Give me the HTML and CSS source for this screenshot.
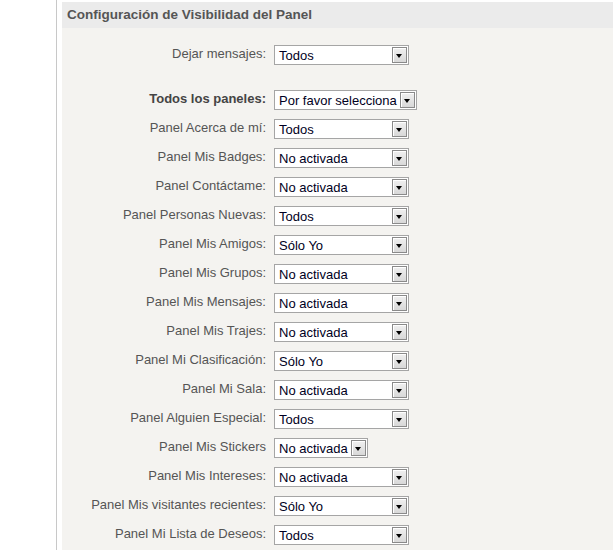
FILE: index.html
```html
<!DOCTYPE html>
<html lang="es">
<head>
<meta charset="utf-8">
<link rel="stylesheet" href="styles.css">
</head>
<body>
<div class="page">
  <div class="gutter"></div>
  <div class="panel">
    <div class="panel-head">Configuración de Visibilidad del Panel</div>
    <div class="panel-body">
      <div class="row row-first">
        <div class="label">Dejar mensajes:</div>
        <div class="sel"><span class="val">Todos</span><span class="btn"></span></div>
      </div>
      <div class="row row-all">
        <div class="label label-bold">Todos los paneles:</div>
        <div class="sel sel-wide"><span class="val">Por favor selecciona</span><span class="btn"></span></div>
      </div>
      <div class="row">
        <div class="label">Panel Acerca de mí:</div>
        <div class="sel"><span class="val">Todos</span><span class="btn"></span></div>
      </div>
      <div class="row">
        <div class="label">Panel Mis Badges:</div>
        <div class="sel"><span class="val">No activada</span><span class="btn"></span></div>
      </div>
      <div class="row">
        <div class="label">Panel Contáctame:</div>
        <div class="sel"><span class="val">No activada</span><span class="btn"></span></div>
      </div>
      <div class="row">
        <div class="label">Panel Personas Nuevas:</div>
        <div class="sel"><span class="val">Todos</span><span class="btn"></span></div>
      </div>
      <div class="row">
        <div class="label">Panel Mis Amigos:</div>
        <div class="sel"><span class="val">Sólo Yo</span><span class="btn"></span></div>
      </div>
      <div class="row">
        <div class="label">Panel Mis Grupos:</div>
        <div class="sel"><span class="val">No activada</span><span class="btn"></span></div>
      </div>
      <div class="row">
        <div class="label">Panel Mis Mensajes:</div>
        <div class="sel"><span class="val">No activada</span><span class="btn"></span></div>
      </div>
      <div class="row">
        <div class="label">Panel Mis Trajes:</div>
        <div class="sel"><span class="val">No activada</span><span class="btn"></span></div>
      </div>
      <div class="row">
        <div class="label">Panel Mi Clasificación:</div>
        <div class="sel"><span class="val">Sólo Yo</span><span class="btn"></span></div>
      </div>
      <div class="row">
        <div class="label">Panel Mi Sala:</div>
        <div class="sel"><span class="val">No activada</span><span class="btn"></span></div>
      </div>
      <div class="row">
        <div class="label">Panel Alguien Especial:</div>
        <div class="sel"><span class="val">Todos</span><span class="btn"></span></div>
      </div>
      <div class="row">
        <div class="label">Panel Mis Stickers</div>
        <div class="sel sel-narrow"><span class="val">No activada</span><span class="btn"></span></div>
      </div>
      <div class="row">
        <div class="label">Panel Mis Intereses:</div>
        <div class="sel"><span class="val">No activada</span><span class="btn"></span></div>
      </div>
      <div class="row">
        <div class="label">Panel Mis visitantes recientes:</div>
        <div class="sel"><span class="val">Sólo Yo</span><span class="btn"></span></div>
      </div>
      <div class="row">
        <div class="label">Panel Mi Lista de Deseos:</div>
        <div class="sel"><span class="val">Todos</span><span class="btn"></span></div>
      </div>
    </div>
  </div>
</div>
</body>
</html>
```

FILE: styles.css
```css
html, body {
  margin: 0;
  padding: 0;
  background: #ffffff;
}

body {
  font-family: "Liberation Sans", Arial, sans-serif;
  font-size: 13px;
}

.page {
  display: flex;
  min-height: 550px;
}

.gutter {
  width: 56px;
  border-right: 1px solid #c8c8c8;
  margin-right: 5px;
  flex: none;
}

.panel {
  flex: 1;
  margin-top: 2px;
  background: #f4f3f0;
}

.panel-head {
  background: #ebebeb;
  height: 26px;
  line-height: 26px;
  padding-left: 5px;
  font-weight: bold;
  font-size: 13.5px;
  color: #555555;
}

.panel-body {
  padding-top: 17px;
}

.row {
  display: flex;
  align-items: flex-start;
  height: 20px;
  margin-bottom: 9px;
}

.row-first {
  margin-bottom: 25px;
}

.label {
  width: 204px;
  margin-right: 8px;
  text-align: right;
  color: #555555;
  line-height: 18px;
  white-space: nowrap;
}

.label-bold {
  font-weight: bold;
  color: #444444;
}

.sel {
  box-sizing: border-box;
  width: 135px;
  height: 20px;
  border: 1px solid #a5a5a5;
  background: #ffffff;
  display: flex;
  align-items: flex-start;
}

.sel-wide {
  width: 143px;
}

.sel-narrow {
  width: 94px;
}

.val {
  flex: 1;
  padding: 2px 0 0 4px;
  color: #000022;
  white-space: nowrap;
  overflow: hidden;
  line-height: 16px;
}

.btn {
  position: relative;
  box-sizing: border-box;
  width: 15px;
  height: 16px;
  margin: 1px 1px 0 0;
  border: 1px solid #8a8a8a;
  background: linear-gradient(#f0f0f0, #d8d8d8);
  box-shadow: inset 1px 1px 0 #ffffff;
  flex: none;
}

.btn::after {
  content: "";
  position: absolute;
  left: 3px;
  top: 6px;
  border-left: 3.5px solid transparent;
  border-right: 3.5px solid transparent;
  border-top: 4px solid #000000;
}
```
